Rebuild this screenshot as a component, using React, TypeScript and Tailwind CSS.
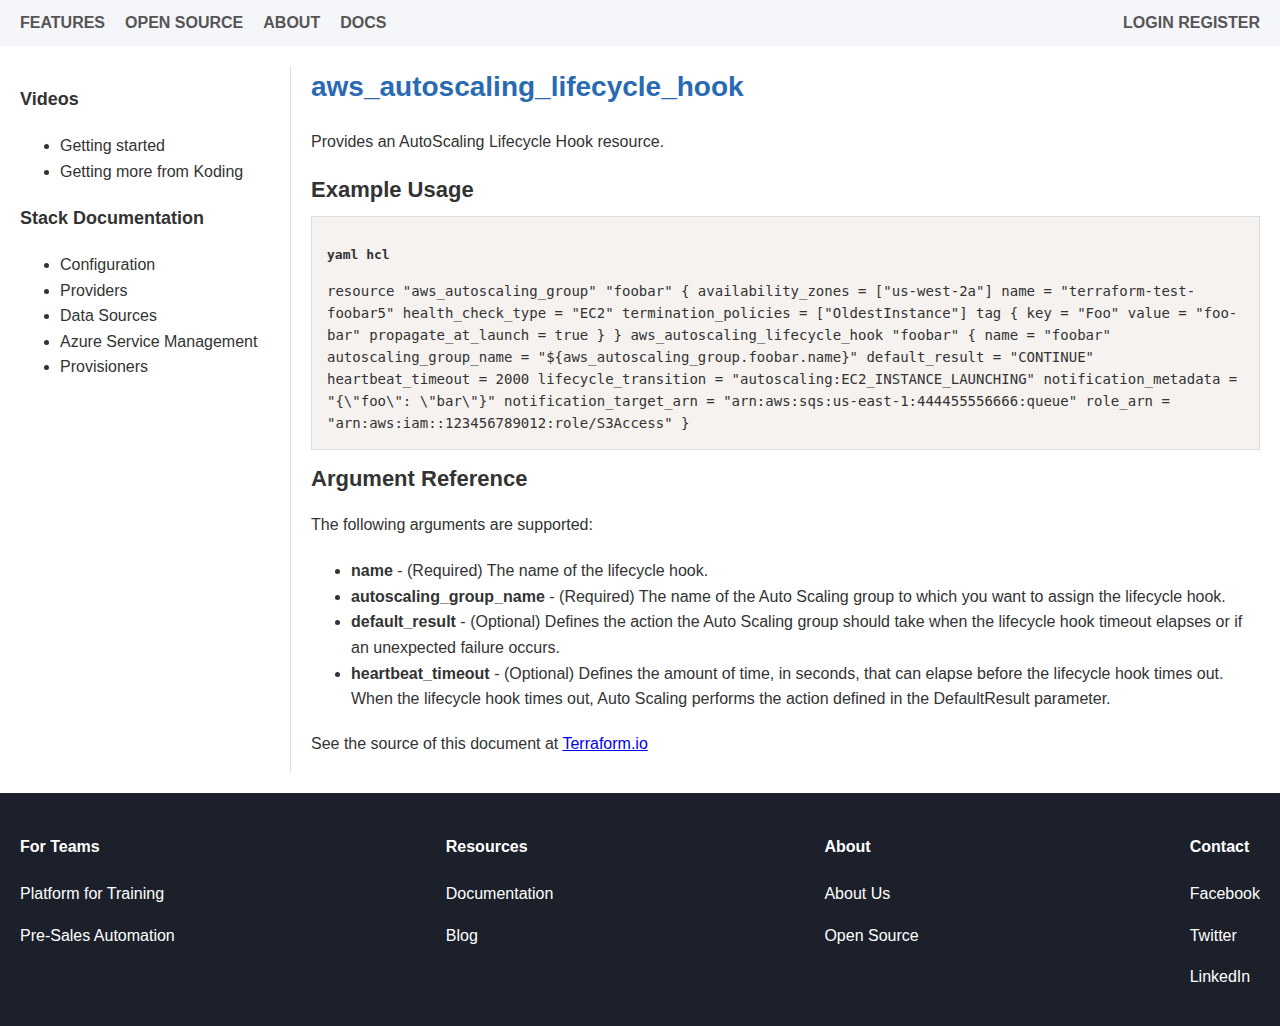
const sans = { fontFamily: '"Liberation Sans", Arial, Helvetica, sans-serif' };

const navLeft = ['FEATURES', 'OPEN SOURCE', 'ABOUT', 'DOCS'];

const code = `resource "aws_autoscaling_group" "foobar" { availability_zones = ["us-west-2a"] name = "terraform-test-foobar5" health_check_type = "EC2" termination_policies = ["OldestInstance"] tag { key = "Foo" value = "foo-bar" propagate_at_launch = true } } aws_autoscaling_lifecycle_hook "foobar" { name = "foobar" autoscaling_group_name = "\${aws_autoscaling_group.foobar.name}" default_result = "CONTINUE" heartbeat_timeout = 2000 lifecycle_transition = "autoscaling:EC2_INSTANCE_LAUNCHING" notification_metadata = "{\\"foo\\": \\"bar\\"}" notification_target_arn = "arn:aws:sqs:us-east-1:444455556666:queue" role_arn = "arn:aws:iam::123456789012:role/S3Access" }`;

const args = [
  { name: 'name', text: '(Required) The name of the lifecycle hook.' },
  {
    name: 'autoscaling_group_name',
    text: '(Required) The name of the Auto Scaling group to which you want to assign the lifecycle hook.',
  },
  {
    name: 'default_result',
    text: '(Optional) Defines the action the Auto Scaling group should take when the lifecycle hook timeout elapses or if an unexpected failure occurs.',
  },
  {
    name: 'heartbeat_timeout',
    text: '(Optional) Defines the amount of time, in seconds, that can elapse before the lifecycle hook times out. When the lifecycle hook times out, Auto Scaling performs the action defined in the DefaultResult parameter.',
  },
];

const footerCols = [
  { title: 'For Teams', items: ['Platform for Training', 'Pre-Sales Automation'] },
  { title: 'Resources', items: ['Documentation', 'Blog'] },
  { title: 'About', items: ['About Us', 'Open Source'] },
  { title: 'Contact', items: ['Facebook', 'Twitter', 'LinkedIn'] },
];

function Sidebar() {
  return (
    <aside className="w-[271px] shrink-0 border-r border-[#dddddd] pt-[21px] text-[#333333]">
      <h3 className="text-[18px] font-bold leading-6">Videos</h3>
      <ul className="mt-[22px] list-disc pl-10 text-[16px] leading-[25.5px]">
        <li>Getting started</li>
        <li>Getting more from Koding</li>
      </ul>
      <h3 className="mt-[22px] text-[18px] font-bold leading-6">Stack Documentation</h3>
      <ul className="mt-[22px] list-disc pl-10 text-[16px] leading-[25.5px]">
        <li>Configuration</li>
        <li>Providers</li>
        <li>Data Sources</li>
        <li>Azure Service Management</li>
        <li>Provisioners</li>
      </ul>
    </aside>
  );
}

function Content() {
  return (
    <main className="min-w-0 flex-1 pb-[17px] pl-5 text-[16px] leading-[25.6px] text-[#333333]">
      <h1 className="text-[28px] font-bold leading-[42px] text-[#2a6ab3]">aws_autoscaling_lifecycle_hook</h1>
      <p className="mt-[21px]">Provides an AutoScaling Lifecycle Hook resource.</p>
      <h2 className="mt-5 text-[22px] font-bold leading-[30px]">Example Usage</h2>
      <div
        className="mt-[11px] border border-[#dddddd] bg-[#f5f2f0] px-[15px] pb-[15px] pt-[27px] text-[14px] leading-[22px] text-[#333333]"
        style={{ fontFamily: '"DejaVu Sans Mono", Menlo, monospace' }}
      >
        <div className="text-[13px] font-bold">yaml hcl</div>
        <pre className="mt-[14px] whitespace-pre-wrap break-words" style={{ fontFamily: 'inherit' }}>
          {code}
        </pre>
      </div>
      <h2 className="mt-[14px] text-[22px] font-bold leading-[30px]">Argument Reference</h2>
      <p className="mt-[18px]">The following arguments are supported:</p>
      <ul className="mt-[21px] list-disc pl-10">
        {args.map((a) => (
          <li key={a.name}>
            <strong>{a.name}</strong> - {a.text}
          </li>
        ))}
      </ul>
      <p className="mt-[19px]">
        See the source of this document at{' '}
        <a href="#" className="text-[#0000ee] underline">
          Terraform.io
        </a>
      </p>
    </main>
  );
}

export default function App() {
  return (
    <div className="min-h-[1026px] bg-white" style={sans}>
      <header className="flex h-[46px] items-center justify-between bg-[#f5f6fa] px-5 text-[16px] font-bold text-[#555555]">
        <nav className="flex gap-5">
          {navLeft.map((n) => (
            <a key={n} href="#">
              {n}
            </a>
          ))}
        </nav>
        <a href="#">LOGIN REGISTER</a>
      </header>

      <div className="flex px-5 pt-5">
        <Sidebar />
        <Content />
      </div>

      <footer className="mt-5 flex justify-between bg-[#1c202b] px-5 pb-10 pt-[42px] text-[16px] text-white">
        {footerCols.map((c) => (
          <div key={c.title}>
            <h4 className="font-bold leading-6">{c.title}</h4>
            <ul className="mt-[23px] flex flex-col gap-[17.5px]">
              {c.items.map((i) => (
                <li key={i} className="leading-6">
                  {i}
                </li>
              ))}
            </ul>
          </div>
        ))}
      </footer>
    </div>
  );
}
